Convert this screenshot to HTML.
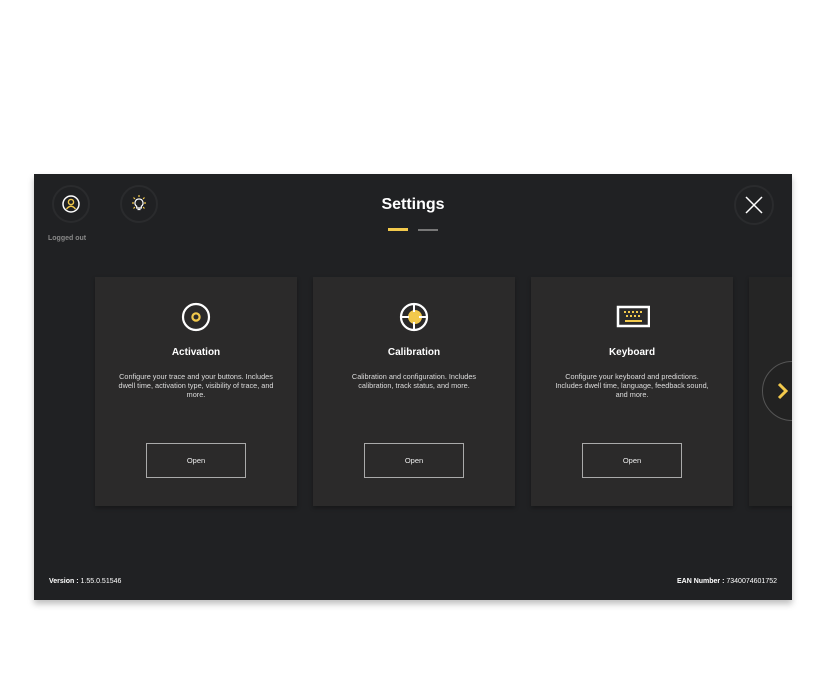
<!DOCTYPE html>
<html><head><style>
body{margin:0;width:825px;height:675px;background:#fff;position:relative;overflow:hidden;font-family:"Liberation Sans",sans-serif}
#p{position:absolute;left:34px;top:174px;width:758px;height:426px;background:#202123;overflow:hidden;box-shadow:0 4px 6px rgba(0,0,0,.25)}
.circ{position:absolute;width:38px;height:38px;border-radius:50%;border:2px solid #2a2b2d;box-sizing:border-box}
.card{position:absolute;top:103px;width:202px;height:229px;background:#2b2a2a;box-shadow:0 2px 4px rgba(0,0,0,.3);text-align:center;color:#fff}
.card h3{margin:0;position:absolute;top:70px;width:100%;font-size:10px;font-weight:bold}
.card p{margin:0;position:absolute;top:95px;left:22px;right:22px;font-size:7.3px;line-height:9px;color:#ddd}
.btn{position:absolute;left:51px;top:166px;width:100px;height:35px;border:1px solid #aaa;box-sizing:border-box;font-size:7.5px;line-height:33px;color:#eee}
.ic{position:absolute;left:85px;top:24px}
</style></head><body>
<div id="p">
<div class="circ" style="left:18px;top:11px"></div>
<svg style="position:absolute;left:27px;top:20px" width="20" height="20" viewBox="0 0 20 20"><circle cx="10" cy="10" r="8" fill="none" stroke="#fff" stroke-width="1.5"/><circle cx="10" cy="8" r="2.6" fill="none" stroke="#f2c94c" stroke-width="1.4"/><path d="M5.5 15 Q10 9.5 14.5 15" fill="none" stroke="#f2c94c" stroke-width="1.4"/></svg>
<div style="position:absolute;left:14px;top:61px;font-size:7px;color:#888;font-weight:bold">Logged out</div>
<div class="circ" style="left:86px;top:11px"></div>
<svg style="position:absolute;left:95px;top:20px" width="20" height="20" viewBox="0 0 20 20"><path d="M10 5a4 4 0 0 0-2.3 7.3V14h4.6v-1.7A4 4 0 0 0 10 5z M8.5 15.5h3" fill="none" stroke="#fff" stroke-width="1.2"/><g stroke="#f2c94c" stroke-width="1.2"><path d="M10 1v2M3 9h2M15 9h2M4.5 3.5l1.4 1.4M15.5 3.5l-1.4 1.4M4.5 14.5l1.4-1.4M15.5 14.5l-1.4-1.4"/></g></svg>
<div style="position:absolute;left:0;width:758px;top:22px;text-align:center;color:#fff;font-size:16px;font-weight:bold">Settings</div>
<div style="position:absolute;left:354px;top:54px;width:20px;height:3px;background:#f2c94c"></div>
<div style="position:absolute;left:384px;top:55px;width:20px;height:2px;background:#777"></div>
<div class="circ" style="left:700px;top:11px;width:40px;height:40px"></div>
<svg style="position:absolute;left:710px;top:21px" width="20" height="20"><path d="M2 2L18 18M18 2L2 18" stroke="#fff" stroke-width="1.5"/></svg>
<div class="card" style="left:61px"><svg class="ic" width="32" height="32"><circle cx="16" cy="16" r="13" fill="none" stroke="#fff" stroke-width="2.2"/><circle cx="16" cy="16" r="3.6" fill="none" stroke="#f2c94c" stroke-width="2.2"/></svg><h3>Activation</h3><p>Configure your trace and your buttons. Includes dwell time, activation type, visibility of trace, and more.</p><div class="btn">Open</div></div>
<div class="card" style="left:279px"><svg class="ic" width="32" height="32"><circle cx="17" cy="16" r="7" fill="#f2c94c"/><circle cx="16" cy="16" r="13" fill="none" stroke="#fff" stroke-width="2.2"/><path d="M16 2v9M16 21v9M2 16h9M21 16h9" stroke="#fff" stroke-width="2"/></svg><h3>Calibration</h3><p>Calibration and configuration. Includes calibration, track status, and more.</p><div class="btn">Open</div></div>
<div class="card" style="left:497px"><svg class="ic" width="34" height="32"><rect x="2" y="6" width="31" height="19" fill="none" stroke="#fff" stroke-width="2.5"/><g fill="#f2c94c"><rect x="8" y="10" width="2" height="2"/><rect x="12" y="10" width="2" height="2"/><rect x="16" y="10" width="2" height="2"/><rect x="20" y="10" width="2" height="2"/><rect x="24" y="10" width="2" height="2"/><rect x="10" y="14" width="2" height="2"/><rect x="14" y="14" width="2" height="2"/><rect x="18" y="14" width="2" height="2"/><rect x="22" y="14" width="2" height="2"/><rect x="9" y="19" width="17" height="2"/></g></svg><h3>Keyboard</h3><p>Configure your keyboard and predictions. Includes dwell time, language, feedback sound, and more.</p><div class="btn">Open</div></div>
<div class="card" style="left:715px;background:#252525"></div>
<div style="position:absolute;left:728px;top:187px;width:60px;height:60px;border-radius:50%;border:1px solid #555;box-sizing:border-box;background:#222"></div>
<svg style="position:absolute;left:742px;top:208px" width="14" height="18"><path d="M3 2l7 7-7 7" fill="none" stroke="#f2c94c" stroke-width="3"/></svg>
<div style="position:absolute;left:15px;top:404px;font-size:7px;color:#fff"><b>Version :</b> 1.55.0.51546</div>
<div style="position:absolute;right:15px;top:404px;font-size:7px;color:#fff"><b>EAN Number :</b> 7340074601752</div>
</div>
</body></html>
